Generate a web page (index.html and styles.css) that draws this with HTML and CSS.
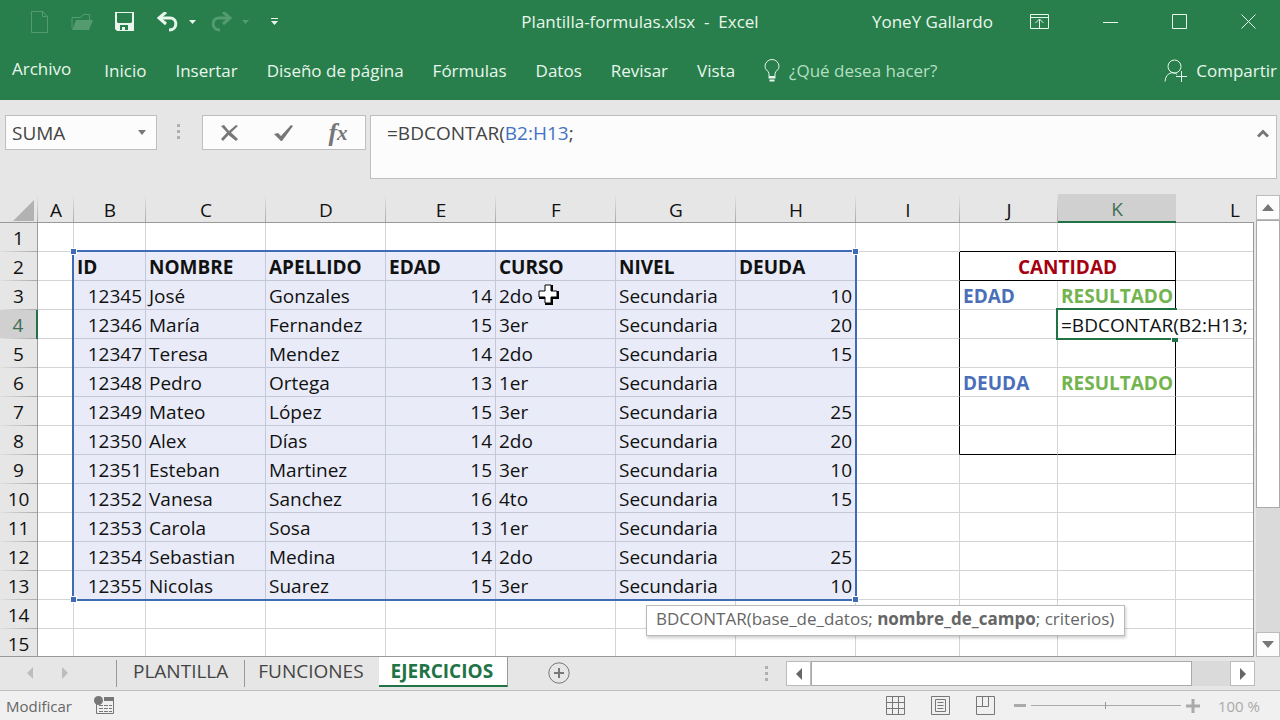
FILE: index.html
```html
<!DOCTYPE html>
<html lang="es">
<head>
<meta charset="utf-8">
<meta name="viewport" content="width=device-width, initial-scale=1">
<title>Plantilla-formulas.xlsx - Excel</title>
<link rel="stylesheet" href="styles.css">
</head>
<body>
<div class="app">
  <header class="top">
    <div class="titlebar">
      <div class="quick">
        <button class="dim" aria-label="Nuevo"><svg width="18" height="22" fill="none" stroke="currentColor"><path d="M.5.5h11l5 5v16H.5zM11.500.5v5h5"/></svg></button>
        <button class="dim" aria-label="Abrir"><svg width="22" height="18"><path d="M1 15V4.500h8l4-3h5.500V7" fill="none" stroke="currentColor"/><path d="M5 7h17l-4 10H1z" fill="currentColor"/></svg></button>
        <button aria-label="Guardar"><svg width="20" height="20" fill="currentColor"><path fill-rule="evenodd" d="M0 0h19v19H2l-2-2zM2 1v9l1 1h13l1-1V1zM5 13v5h2v-3h3v3h3v-5z"/></svg></button>
        <div class="history">
          <div class="split">
            <button aria-label="Deshacer"><svg width="22" height="20" fill="none" stroke="currentColor" stroke-width="3"><path d="M3 6h10c8 0 8 12-1 12"/><path d="M9 0L2 6l7 6"/></svg></button>
            <button aria-label="Opciones de deshacer"><svg width="7" height="4" fill="currentColor"><path d="M0 0h7L3.500 4z"/></svg></button>
          </div>
          <div class="split dim">
            <button aria-label="Rehacer"><svg width="22" height="20" fill="none" stroke="currentColor" stroke-width="3"><path d="M19 6H9C1 6 1 18 10 18"/><path d="M13 0l7 6-7 6"/></svg></button>
            <button aria-label="Opciones de rehacer"><svg width="7" height="4" fill="currentColor"><path d="M0 0h7L3.500 4z"/></svg></button>
          </div>
        </div>
        <button aria-label="Personalizar barra"><svg width="7" height="8" fill="currentColor"><path d="M0 0h7v1H0zM0 3h7L3.500 7z"/></svg></button>
      </div>
      <h1 class="doc-title">Plantilla-formulas.xlsx&nbsp; -&nbsp; Excel</h1>
      <div class="window">
        <span class="user">YoneY Gallardo</span>
        <button aria-label="Opciones de la cinta"><svg width="20" height="16" fill="none" stroke="currentColor"><path d="M.5.5h18v14H.5zM.5 3.500h18M9.500 14V5.500M5.500 9l4-4 4 4"/></svg></button>
        <button aria-label="Minimizar"><svg width="16" height="16" stroke="currentColor"><path d="M0 8.500h15"/></svg></button>
        <button aria-label="Maximizar"><svg width="16" height="16" fill="none" stroke="currentColor"><path d="M.5.5h14v14H.5z"/></svg></button>
        <button aria-label="Cerrar"><svg width="16" height="16" fill="none" stroke="currentColor"><path d="M.5.5l14 14M14.500.5l-14 14"/></svg></button>
      </div>
    </div>
    <nav class="ribbon">
      <a class="file" href="#">Archivo</a>
      <a href="#">Inicio</a>
      <a href="#">Insertar</a>
      <a href="#">Diseño de página</a>
      <a href="#">Fórmulas</a>
      <a href="#">Datos</a>
      <a href="#">Revisar</a>
      <a href="#">Vista</a>
      <label class="tell"><svg width="17" height="24" fill="none" stroke="currentColor"><path d="M5 17.500v-3C4 11 1 11 1 7.500a7 7 0 0 1 14 0c0 3.500-3 3.500-4 7v3z"/><path d="M4.500 18.500h7M5.500 21.500h5" stroke-width="2"/></svg><input type="text" placeholder="¿Qué desea hacer?" aria-label="¿Qué desea hacer?"></label>
      <button class="share"><svg width="23" height="24" fill="none" stroke="currentColor"><circle cx="10.500" cy="7.500" r="6.500"/><path d="M1 22.500c1-10 9-10 12-7M17.500 12v11M12 17.500h11"/></svg>Compartir</button>
    </nav>
  </header>

  <section class="formula-bar">
    <div class="namebox"><input type="text" value="SUMA" aria-label="Cuadro de nombres"><button aria-label="Lista de nombres"><svg width="8" height="5" fill="#777"><path d="M0 0h8L4 5z"/></svg></button></div>
    <div class="dots"><i></i><i></i><i></i></div>
    <div class="entry">
      <button aria-label="Cancelar"><svg width="20" height="18" fill="#777"><path d="M1 2l3-1 5 6 7-6 2 1-7 6.500 7 6.500-2 2-7.500-6L3 17l-2-2 6-6.500z"/></svg></button>
      <button aria-label="Introducir"><svg width="20" height="18" fill="#777"><path d="M0 10l4-1 3 3L17 1l2 1-11 15H7z"/></svg></button>
      <button class="fx" aria-label="Insertar función"><em>f</em><em class="x">x</em></button>
    </div>
    <div class="formula">
      <div class="formula-text" role="textbox" contenteditable="true" spellcheck="false" aria-label="Barra de fórmulas">=BDCONTAR(<span class="ref">B2:H13</span>;</div>
      <button aria-label="Contraer barra de fórmulas"><svg width="12" height="9" fill="none" stroke="#777" stroke-width="3"><path d="M1 7.500l5-5 5 5"/></svg></button>
    </div>
  </section>

  <main class="work">
    <div class="grid">
      <table>
        <colgroup><col class="w38"><col class="w36"><col class="w72"><col class="w120"><col class="w120"><col class="w110"><col class="w120"><col class="w120"><col class="w120"><col class="w104"><col class="w98"><col class="w118"><col class="w118"></colgroup>
        <thead><tr><th class="corner" aria-label="Seleccionar todo"><svg width="21" height="21" fill="#b2b2b2"><path d="M21 0v21H0z"/></svg></th><th>A</th><th>B</th><th>C</th><th>D</th><th>E</th><th>F</th><th>G</th><th>H</th><th>I</th><th>J</th><th class="on">K</th><th class="edge">L</th></tr></thead>
        <tbody>
          <tr><th>1</th><td></td><td></td><td></td><td></td><td></td><td></td><td></td><td></td><td></td><td class="bb"></td><td class="bb"></td><td></td></tr>
          <tr class="data names"><th>2</th><td></td><td>ID</td><td>NOMBRE</td><td>APELLIDO</td><td>EDAD</td><td>CURSO</td><td>NIVEL</td><td>DEUDA</td><td class="br"></td><td colspan="2" class="bb br count">CANTIDAD</td><td></td></tr>
          <tr class="data"><th>3</th><td></td><td>12345</td><td>José</td><td>Gonzales</td><td>14</td><td>2do<svg class="cursor" width="22" height="22"><path d="M7 1h8v6h6v8h-6v6H7v-6H1V7h6z"/><path class="cross" d="M7 1h6v6h6v6h-6v6H7v-6H1V7h6z"/></svg></td><td>Secundaria</td><td>10</td><td class="br"></td><td class="blue">EDAD</td><td class="br green">RESULTADO</td><td></td></tr>
          <tr class="data"><th class="on">4</th><td></td><td>12346</td><td>María</td><td>Fernandez</td><td>15</td><td>3er</td><td>Secundaria</td><td>20</td><td class="br"></td><td></td><td class="active"><div class="editor">=BDCONTAR(B2:H13;</div></td><td></td></tr>
          <tr class="data"><th>5</th><td></td><td>12347</td><td>Teresa</td><td>Mendez</td><td>14</td><td>2do</td><td>Secundaria</td><td>15</td><td class="br"></td><td></td><td class="br"></td><td></td></tr>
          <tr class="data"><th>6</th><td></td><td>12348</td><td>Pedro</td><td>Ortega</td><td>13</td><td>1er</td><td>Secundaria</td><td></td><td class="br"></td><td class="blue">DEUDA</td><td class="br green">RESULTADO</td><td></td></tr>
          <tr class="data"><th>7</th><td></td><td>12349</td><td>Mateo</td><td>López</td><td>15</td><td>3er</td><td>Secundaria</td><td>25</td><td class="br"></td><td></td><td class="br"></td><td></td></tr>
          <tr class="data"><th>8</th><td></td><td>12350</td><td>Alex</td><td>Días</td><td>14</td><td>2do</td><td>Secundaria</td><td>20</td><td class="br"></td><td class="bb"></td><td class="bb br"></td><td></td></tr>
          <tr class="data"><th>9</th><td></td><td>12351</td><td>Esteban</td><td>Martinez</td><td>15</td><td>3er</td><td>Secundaria</td><td>10</td><td></td><td></td><td></td><td></td></tr>
          <tr class="data"><th>10</th><td></td><td>12352</td><td>Vanesa</td><td>Sanchez</td><td>16</td><td>4to</td><td>Secundaria</td><td>15</td><td></td><td></td><td></td><td></td></tr>
          <tr class="data"><th>11</th><td></td><td>12353</td><td>Carola</td><td>Sosa</td><td>13</td><td>1er</td><td>Secundaria</td><td></td><td></td><td></td><td></td><td></td></tr>
          <tr class="data"><th>12</th><td></td><td>12354</td><td>Sebastian</td><td>Medina</td><td>14</td><td>2do</td><td>Secundaria</td><td>25</td><td></td><td></td><td></td><td></td></tr>
          <tr class="data"><th>13</th><td></td><td>12355</td><td>Nicolas</td><td>Suarez</td><td>15</td><td>3er</td><td>Secundaria</td><td>10</td><td></td><td></td><td></td><td></td></tr>
          <tr><th>14</th><td></td><td></td><td></td><td></td><td></td><td></td><td></td><td></td><td></td><td></td><td></td><td></td></tr>
          <tr><th>15</th><td></td><td></td><td></td><td></td><td></td><td></td><td></td><td></td><td></td><td></td><td></td><td></td></tr>
        </tbody>
      </table>
      <div class="range"><i class="tl"></i><i class="tr"></i><i class="bl"></i><i class="brc"></i></div>
      <div class="hint" role="tooltip">BDCONTAR(base_de_datos; <b>nombre_de_campo</b>; criterios)</div>
      <div class="frame"></div>
    </div>
    <div class="vscroll">
      <button aria-label="Subir"><svg width="12" height="7" fill="#777"><path d="M0 7h12L6 0z"/></svg></button>
      <div class="track"><div class="thumb"></div></div>
      <button aria-label="Bajar"><svg width="12" height="7" fill="#777"><path d="M0 0h12L6 7z"/></svg></button>
    </div>
  </main>

  <section class="sheets">
    <div class="sheet-nav">
      <button aria-label="Hoja anterior"><svg width="6" height="12" fill="#bdbdbd"><path d="M6 0v12L0 6z"/></svg></button>
      <button aria-label="Hoja siguiente"><svg width="6" height="12" fill="#bdbdbd"><path d="M0 0v12l6-6z"/></svg></button>
    </div>
    <nav class="tabs">
      <a href="#">PLANTILLA</a>
      <a href="#">FUNCIONES</a>
      <a class="current" href="#">EJERCICIOS</a>
    </nav>
    <button class="add" aria-label="Hoja nueva"><svg width="22" height="22" fill="none" stroke="#777"><circle cx="11" cy="11" r="10.200"/><path d="M11 6v10M6 11h10" stroke-width="2"/></svg></button>
    <div class="dots"><i></i><i></i><i></i></div>
    <div class="hscroll">
      <button aria-label="Izquierda"><svg width="6" height="12" fill="#666"><path d="M6 0v12L0 6z"/></svg></button>
      <div class="track"><div class="thumb"></div></div>
      <button aria-label="Derecha"><svg width="6" height="12" fill="#666"><path d="M0 0v12l6-6z"/></svg></button>
    </div>
  </section>

  <footer class="status">
    <span>Modificar</span>
    <button class="macro" aria-label="Grabar macro"><svg width="20" height="20"><path d="M2.500 8v9.500h17V2" fill="none" stroke="#777"/><path d="M10 1h10v4H10z" fill="#777"/><circle cx="4.500" cy="4.500" r="4.500" fill="#777"/><path d="M5 9.500h4m1 0h4m1 0h3M5 12.500h4m1 0h4m1 0h3M5 15.500h4m1 0h4m1 0h3" stroke="#777"/></svg></button>
    <div class="views">
      <button aria-label="Normal"><svg width="20" height="20" fill="none" stroke="#777"><path d="M.5.5h18v18H.5zM6.500.5v18M12.500.5v18M.5 6.500h18M.5 12.500h18"/></svg></button>
      <button aria-label="Diseño de página"><svg width="20" height="20" fill="none" stroke="#777"><path d="M.5.5h18v18H.5zM4.500 3.500h10v12h-10zM6.500 6.500h6M6.500 9.500h6M6.500 12.500h6"/></svg></button>
      <button aria-label="Vista previa de salto de página"><svg width="20" height="20" fill="none" stroke="#777"><path d="M.5.5h18v18H.5zM.5 10.500h12V.5M6.500.5v10"/></svg></button>
    </div>
    <div class="zoom">
      <button aria-label="Alejar"><svg width="12" height="12" fill="#aaa"><path d="M0 4h12v3H0z"/></svg></button>
      <input type="range" min="0" max="100" value="50" aria-label="Zoom">
      <button aria-label="Acercar"><svg width="14" height="14" fill="#aaa"><path d="M5.500 0h3v5.500H14v3H8.500V14h-3V8.500H0v-3h5.500z"/></svg></button>
      <output>100 %</output>
    </div>
  </footer>
</div>
</body>
</html>
```

FILE: styles.css
```css
*, *::before, *::after { box-sizing: border-box; }
body { margin: 0; font-family: "Open Sans", "Noto Sans", sans-serif; font-size: 17px; color: #111; }
button { display: flex; align-items: center; justify-content: center; margin: 0; padding: 0; border: 0; background: none; color: inherit; font: inherit; }
input { min-width: 0; padding: 0; border: 0; background: none; color: inherit; font: inherit; outline: 0; }
a { color: inherit; text-decoration: none; }
svg { display: block; flex: none; }
.app { display: flex; flex-direction: column; height: 100vh; overflow: hidden; background: #e6e6e6; }

/* title bar and ribbon */
.top { background: #287f4b; color: #e9f6ed; }
.titlebar { display: grid; grid-template-columns: 1fr auto 1fr; align-items: center; height: 43px; padding: 0 23px; }
.quick, .history, .split, .window { display: flex; align-items: center; }
.quick { gap: 22px; padding-left: 8px; }
.history { gap: 14px; }
.split { gap: 10px; }
.dim { color: #549b70; }
.doc-title { margin: 0; font-size: 17px; font-weight: 400; white-space: nowrap; }
.window { justify-content: flex-end; gap: 53px; }
.user { margin-right: -16px; white-space: nowrap; }
.ribbon { display: flex; align-items: center; gap: 29px; height: 57px; padding: 0 0 2px 12px; white-space: nowrap; }
.file { margin-right: 4px; padding-bottom: 4px; }
.tell { display: flex; align-items: center; gap: 8px; flex: 1; }
.tell input { flex: 1; }
.tell input::placeholder { color: #b4dfc2; opacity: 1; }
.share { gap: 9px; padding-right: 3px; }

/* formula bar */
.formula-bar { display: flex; align-items: flex-start; padding: 15px 3px 15px 5px; font-size: 19px; color: #444; }
.namebox, .entry { display: flex; height: 35px; border: 1px solid #bfbfbf; background: #fcfcfc; }
.namebox { width: 152px; padding: 0 10px 0 6px; }
.namebox input { flex: 1; }
.dots { display: flex; flex-direction: column; justify-content: center; gap: 3px; height: 33px; }
.dots i { width: 3px; height: 3px; background: #b0b0b0; }
.formula-bar .dots { margin: 0 22px 0 20px; }
.entry { width: 164px; margin-right: 4px; }
.entry button { flex: 1; }
.fx { font-family: "Liberation Serif", serif; font-size: 26px; font-weight: 700; color: #777; }
.fx em { line-height: 30px; }
.fx .x { font-size: 21px; }
.formula { display: flex; align-items: flex-start; flex: 1; height: 64px; padding: 3px 7px 0 16px; border: 1px solid #bfbfbf; background: #fcfcfc; }
.formula-text { flex: 1; line-height: 28px; outline: 0; }
.formula button { height: 28px; }
.ref { color: #4472c4; }

/* worksheet */
.work { display: flex; flex: 1; min-height: 0; }
.grid { position: relative; flex: 1; margin-right: 2px; overflow: hidden; }
.grid table { width: 1294px; table-layout: fixed; border-collapse: separate; border-spacing: 0; font-size: 19px; line-height: 26px; white-space: nowrap; }
.w36 { width: 36px; }
.w38 { width: 38px; }
.w72 { width: 72px; }
.w98 { width: 98px; }
.w104 { width: 104px; }
.w110 { width: 110px; }
.w118 { width: 118px; }
.w120 { width: 120px; }
.grid th, .grid td { height: 29px; padding: 2px 3px 0; border: 0 solid #d4d4d4; border-width: 0 1px 1px 0; }
.grid th { padding: 0; background: #e6e6e6; font-weight: 400; }
.grid thead th { border-bottom-color: #999; border-right: 0; background: linear-gradient(#e6e6e6, #aaa) right / 1px 100% no-repeat #e6e6e6; padding-top: 4px; line-height: 24px; }
.grid thead .edge { background: #e6e6e6; }
.grid thead .on { border-bottom: 2px solid #217346; background: #d0d0d0; color: #3d6f54; line-height: 23px; }
.grid thead .corner { padding-top: 0; }
.grid thead .corner svg { margin: 4px 0 0 13px; }
.grid tbody th { border-right-color: #999; border-bottom: 0; background: linear-gradient(90deg, #e0e0e0, #aaa) bottom / 100% 1px no-repeat #e6e6e6; }
.grid tbody .on { border-right: 2px solid #217346; background-color: #d0d0d0; color: #3d6f54; }
.grid td { background: #fff; }
.data td:nth-child(n+3):nth-child(-n+9) { border-color: #c5c8d8; background: #e9ecf8; }
.data td:nth-child(3), .data td:nth-child(6), .data td:nth-child(9) { text-align: right; }
.names td:nth-child(n) { text-align: left; font-weight: 700; }
.grid .names .count { text-align: center; color: #a50010; }
.grid .bb { border-bottom-color: #000; }
.grid .br { border-right-color: #000; }
.grid .blue { color: #4a6fb8; font-weight: 700; }
.grid .green { color: #74b44f; font-weight: 700; }
.grid td:has(.cursor), .active { position: relative; }
.cursor { position: absolute; left: 42px; top: 3px; }
.cross { fill: #fff; stroke: #000; }
.editor { position: absolute; left: 0; top: 0; z-index: 1; width: 200px; height: 28px; padding: 2px 0 0 3px; background: #fff; }
.active::before { content: ""; position: absolute; left: -2px; top: -2px; width: 121px; height: 32px; z-index: 2; border: 2px solid #217346; border-right: 0; }
.active::after { content: ""; position: absolute; right: -3px; bottom: -4px; width: 7px; height: 5px; z-index: 2; background: #217346; border: 1px solid #fff; border-width: 1px 0 0 1px; }
.range { position: absolute; left: 72px; top: 56px; width: 785px; height: 351px; border: 2px solid #3f6bb5; pointer-events: none; }
.range i { position: absolute; width: 7px; height: 7px; border: 1px solid #fff; background: #3f6bb5; }
.tl, .bl { left: -4px; }
.tr, .brc { right: -4px; }
.tl, .tr { top: -4px; }
.bl, .brc { bottom: -4px; }
.hint { position: absolute; left: 646px; top: 411px; z-index: 3; height: 31px; padding: 0 10px 0 9px; border: 1px solid #bbb; background: #fff; box-shadow: 1px 2px 3px #0003; color: #666; font-size: 17px; line-height: 26px; white-space: nowrap; }
.frame { position: absolute; inset: 28px 0 0; z-index: 4; border: 1px solid #999; border-width: 0 1px 1px 0; pointer-events: none; }
.vscroll { display: flex; flex-direction: column; width: 24px; padding-top: 1px; }
.vscroll button { height: 25px; border: 1px solid #bbb; background: #fcfcfc; }
.track { flex: 1; background: #dadada; }
.thumb { border: 1px solid #aaa; background: #fff; }
.vscroll .thumb { height: 70%; }

/* sheet tabs */
.sheets { display: flex; align-items: flex-start; height: 34px; padding-right: 25px; border-bottom: 1px solid #c0c0c0; }
.sheet-nav { display: flex; gap: 29px; width: 116px; height: 32px; padding-left: 27px; }
.tabs { display: flex; color: #444; font-size: 19px; line-height: 28px; }
.tabs a { height: 30px; }
.tabs a:not(.current) { height: 27px; margin-top: 3px; padding: 0 16px; border-left: 1px solid #999; line-height: 22px; }
.tabs a + a:not(.current) { padding: 0 15px 0 13px; }
.tabs .current { padding: 0 14px 0 12px; border-bottom: 2px solid #217346; border-right: 1px solid #999; background: #fff; color: #217346; font-weight: 700; }
.add { height: 32px; margin-left: 40px; }
.sheets .dots { margin: 0 18px 0 auto; }
.hscroll { display: flex; width: 469px; height: 25px; margin-top: 4px; }
.hscroll button { width: 25px; border: 1px solid #bbb; background: #fff; }
.hscroll .thumb { width: 91%; height: 25px; }

/* status bar */
.status { display: flex; align-items: center; height: 29px; padding: 0 20px 0 6px; background: #f0f0f0; color: #666; font-size: 15px; }
.macro { margin-left: 22px; }
.views { display: flex; gap: 25px; margin-left: auto; }
.zoom { display: flex; align-items: center; margin-left: 18px; color: #aaa; }
.zoom input { width: 150px; height: 14px; margin: 0 5px; appearance: none; background: linear-gradient(#aaa, #aaa) center / 100% 1px no-repeat; }
.zoom input::-webkit-slider-thumb { appearance: none; width: 1px; height: 7px; background: #999; }
.zoom output { margin-left: 18px; }
```
